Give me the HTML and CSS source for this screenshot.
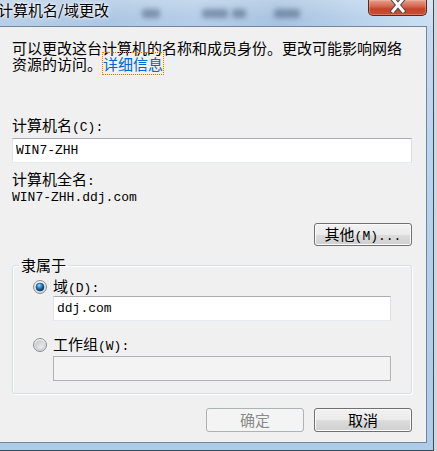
FILE: index.html
```html
<!DOCTYPE html>
<html lang="zh-CN">
<head>
<meta charset="utf-8">
<title>计算机名/域更改</title>
<link rel="stylesheet" href="styles.css">
</head>
<body>
<div class="window">
  <div class="titlebar">
    <span class="title">计算机名/域更改</span>
    <span class="ghost g1"></span>
    <span class="ghost g2"></span>
    <span class="ghost g3"></span>
    <span class="ghost g4"></span>
    <span class="close">
      <svg width="16" height="13" viewBox="0 0 16 13">
        <path d="M3 -1 L13 11 M13 -1 L3 11" stroke="#4a4a4a" stroke-width="5" stroke-linecap="square" fill="none"/>
        <path d="M3 -1 L13 11 M13 -1 L3 11" stroke="#ffffff" stroke-width="3" stroke-linecap="square" fill="none"/>
      </svg>
    </span>
  </div>
  <div class="client">
    <p class="intro">可以更改这台计算机的名称和成员身份。更改可能影响网络资源的访问。<a class="link">详细信息</a></p>
    <div class="label first">计算机名<span class="m">(C):</span></div>
    <input class="field" type="text" value="WIN7-ZHH">
    <div class="label second">计算机全名<span class="m">:</span></div>
    <div class="value">WIN7-ZHH.ddj.com</div>
    <div class="row-right">
      <button class="btn">其他<span class="m">(M)...</span></button>
    </div>
    <fieldset class="group">
      <legend class="legend">隶属于</legend>
      <div class="group-body">
        <div class="radio-row first-radio">
          <svg class="radio" width="14" height="14" viewBox="0 0 14 14">
            <defs>
              <radialGradient id="ro1" cx="50%" cy="25%" r="75%">
                <stop offset="0" stop-color="#ffffff"/>
                <stop offset="1" stop-color="#cfd2d6"/>
              </radialGradient>
              <radialGradient id="rd1" cx="40%" cy="30%" r="70%">
                <stop offset="0" stop-color="#9be0ff"/>
                <stop offset="0.45" stop-color="#2a86cf"/>
                <stop offset="1" stop-color="#0a2b55"/>
              </radialGradient>
            </defs>
            <circle cx="7" cy="7" r="6.5" fill="url(#ro1)" stroke="#8a8e94"/>
            <circle cx="7" cy="7" r="4" fill="url(#rd1)" stroke="#163a63" stroke-width="0.6"/>
          </svg>
          <span>域<span class="m">(D):</span></span>
        </div>
        <div class="indent mt1">
          <input class="field" type="text" value="ddj.com">
        </div>
        <div class="radio-row second-radio">
          <svg class="radio" width="14" height="14" viewBox="0 0 14 14">
            <defs>
              <radialGradient id="ro2" cx="50%" cy="25%" r="75%">
                <stop offset="0" stop-color="#ffffff"/>
                <stop offset="1" stop-color="#cfd2d6"/>
              </radialGradient>
              <linearGradient id="ri2" x1="0" y1="0" x2="1" y2="1">
                <stop offset="0" stop-color="#c4c6c9"/>
                <stop offset="1" stop-color="#f6f6f6"/>
              </linearGradient>
            </defs>
            <circle cx="7" cy="7" r="6.5" fill="url(#ro2)" stroke="#8a8e94"/>
            <circle cx="7" cy="7" r="4.3" fill="url(#ri2)" stroke="#b8bcc1" stroke-width="0.6"/>
          </svg>
          <span>工作组<span class="m">(W):</span></span>
        </div>
        <div class="indent mt3">
          <input class="field disabled" type="text" value="" disabled>
        </div>
      </div>
    </fieldset>
    <div class="actions">
      <button class="btn tall" disabled>确定</button>
      <button class="btn tall">取消</button>
    </div>
  </div>
</div>
</body>
</html>
```
FILE: styles.css
```css
body {
  margin: 0;
  width: 437px;
  height: 451px;
  overflow: hidden;
  background: #d4d6d9;
  font-family: "Noto Sans CJK SC", sans-serif;
  font-size: 15px;
  color: #000;
}

.window {
  width: 434px;
  height: 451px;
  box-sizing: border-box;
  border-right: 1px solid #3e4b5b;
  border-bottom: 1px solid #3e4b5b;
  background: linear-gradient(#c6dcf1, #b4d0ec 55%, #aecbea);
  display: flex;
  flex-direction: column;
}

.titlebar {
  height: 26px;
  flex: none;
  display: flex;
  align-items: center;
  background:
    linear-gradient(rgba(255,255,255,0.22), rgba(255,255,255,0) 70%),
    linear-gradient(90deg, #b8cfe7 0%, #adc7e3 25%, #b5cde8 45%, #a8c3e0 65%, #bcd4ec 85%, #cde0f2 100%);
}

.title {
  align-self: flex-start;
  margin-top: 2px;
  margin-left: -2px;
  line-height: 16px;
  font-size: 15px;
  text-shadow: 0 0 5px #fff, 0 0 3px #fff;
}

.ghost {
  height: 9px;
  background: rgba(45, 65, 95, 0.42);
  filter: blur(2.5px);
  border-radius: 3px;
}
.g1 { width: 18px; margin-left: 33px; }
.g2 { width: 26px; margin-left: 42px; }
.g3 { width: 14px; margin-left: 4px; }
.g4 { width: 26px; margin-left: 28px; }

.close {
  margin-left: auto;
  margin-right: 6px;
  align-self: flex-start;
  width: 59px;
  height: 16px;
  box-sizing: border-box;
  border: 1px solid #5e2417;
  border-top: none;
  border-radius: 0 0 5px 5px;
  background: linear-gradient(#e5a18f 0%, #d66a52 40%, #c7432a 60%, #c65036 100%);
  box-shadow: inset 0 0 0 1px rgba(255, 200, 180, 0.35);
  display: flex;
  justify-content: center;
  align-items: flex-start;
}

.client {
  width: 427px;
  height: 417px;
  flex: none;
  box-sizing: border-box;
  background: #f0f0f0;
  border: 1px solid #72859b;
  border-left: none;
  padding: 0 14px 0 12px;
}

.m {
  font-family: "Liberation Mono", monospace;
  font-size: 13px;
  line-height: 13px;
}

.intro {
  margin: 13px 0 0;
  line-height: 16px;
}

.link {
  color: #0066cc;
  text-decoration: none;
  border: 1px dotted #cf7a12;
}

.label {
  line-height: 16px;
}
.label.first { margin-top: 45px; }
.label.second { margin-top: 8px; }

.field {
  display: block;
  width: 100%;
  height: 25px;
  box-sizing: border-box;
  margin: 4px 0 0;
  padding: 0 3px;
  border: 1px solid;
  border-color: #abadb3 #dbdfe6 #e3e9ef #e2e3ea;
  background: #fff;
  font-family: "Liberation Mono", monospace;
  font-size: 13px;
  color: #000;
  outline: none;
}

.field.disabled {
  border-color: #afb3b8;
  background: #f3f3f3;
}

.value {
  margin-top: 2px;
  line-height: 16px;
  font-family: "Liberation Mono", monospace;
  font-size: 13px;
}

.row-right {
  display: flex;
  justify-content: flex-end;
  margin-top: 17px;
}

.btn {
  width: 98px;
  height: 23px;
  box-sizing: border-box;
  padding: 0;
  border: 1px solid #707070;
  border-radius: 3px;
  background: linear-gradient(#f2f2f2 0%, #ebebeb 50%, #dddddd 50%, #cfcfcf 100%);
  box-shadow: inset 0 0 0 1px #fbfbfb;
  font-family: "Noto Sans CJK SC", sans-serif;
  font-size: 15px;
  line-height: 16px;
  color: #000;
}
.btn.tall { height: 24px; }
.btn:disabled {
  border-color: #adb2b5;
  background: #f4f4f4;
  box-shadow: none;
  color: #8a8a8a;
}

.group {
  margin: 11px 0 0;
  padding: 0 0 12px;
  border: 1px solid #d5dfe5;
  border-radius: 3px;
  box-shadow: inset 1px 1px 0 #fff, 1px 1px 0 #fff;
}

.legend {
  margin-left: 6px;
  padding: 0 2px;
  line-height: 16px;
  font-size: 15px;
}

.group-body {
  padding: 0 20px;
}

.radio-row {
  display: flex;
  align-items: center;
  gap: 6px;
  line-height: 16px;
}
.radio { flex: none; }
.first-radio { margin-top: 5px; }
.second-radio { margin-top: 15px; }

.indent {
  padding-left: 20px;
}
.indent .field { margin-top: 0; }
.mt1 { margin-top: 1px; }
.mt3 { margin-top: 3px; }

.actions {
  display: flex;
  justify-content: flex-end;
  gap: 10px;
  margin-top: 14px;
}
```
